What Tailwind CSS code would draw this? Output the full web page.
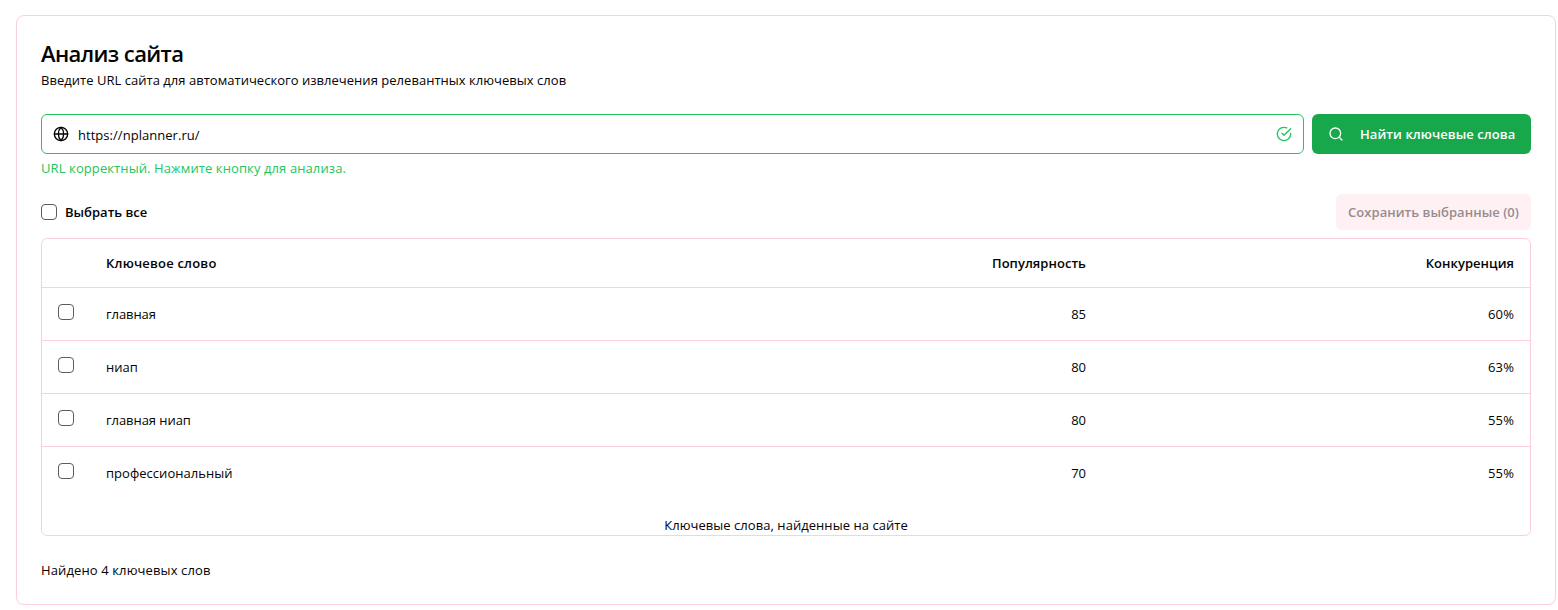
<!DOCTYPE html>
<html lang="ru">
<head>
<meta charset="utf-8">
<title>Анализ сайта</title>
<script src="https://cdn.jsdelivr.net/npm/@tailwindcss/browser@4"></script>
</head>
<body class="bg-white text-[#030303] font-['Open_Sans','Noto_Sans',sans-serif] text-[13px] leading-5 overflow-hidden">
<main class="ml-4 mt-[15px] w-[1540px] h-[590px] rounded-lg border border-[#fccfdc] shadow-xs px-6 pt-6">
  <h1 class="h-[30px] text-[22px] leading-[26px] font-semibold tracking-[-0.6px]">Анализ сайта</h1>
  <p class="h-5 tracking-[0.03px]">Введите URL сайта для автоматического извлечения релевантных ключевых слов</p>

  <div class="mt-6 flex gap-2">
    <div class="flex h-10 w-[1263px] items-center rounded-md border border-[#22c55e] px-[11px]">
      <svg class="size-4 shrink-0" viewBox="0 0 24 24" fill="none" stroke="currentColor" stroke-width="2" stroke-linecap="round" stroke-linejoin="round"><circle cx="12" cy="12" r="10"/><path d="M12 2a14.5 14.5 0 0 0 0 20 14.5 14.5 0 0 0 0-20"/><path d="M2 12h20"/></svg>
      <span class="ml-[9px] mt-0.5 tracking-[0.04px]">https://nplanner.ru/</span>
      <svg class="ml-auto size-4 shrink-0 text-[#22c55e]" viewBox="0 0 24 24" fill="none" stroke="currentColor" stroke-width="2" stroke-linecap="round" stroke-linejoin="round"><path d="M22 11.08V12a10 10 0 1 1-5.93-9.14"/><path d="m9 11 3 3L22 4"/></svg>
    </div>
    <button class="flex h-10 w-[219px] items-center rounded-md bg-[#18a84c] pl-4 font-semibold text-white">
      <svg class="size-4 shrink-0" viewBox="0 0 24 24" fill="none" stroke="currentColor" stroke-width="2" stroke-linecap="round" stroke-linejoin="round"><circle cx="11" cy="11" r="8"/><path d="m21 21-4.3-4.3"/></svg>
      <span class="ml-4 whitespace-nowrap tracking-[0.07px]">Найти ключевые слова</span>
    </button>
  </div>
  <p class="mt-1 h-5 tracking-[0.1px] text-[#22c55e]">URL корректный. Нажмите кнопку для анализа.</p>

  <div class="mt-4 flex h-9 items-center justify-between">
    <label class="flex items-center gap-2 font-semibold"><i class="size-4 rounded-[4px] border border-[#5c5c5c]"></i><span>Выбрать все</span></label>
    <button class="flex h-9 w-[195px] items-center justify-center rounded-md bg-[#fff1f3] font-semibold text-[#968c8e]"><span class="whitespace-nowrap tracking-[0.05px]">Сохранить выбранные (0)</span></button>
  </div>

  <section class="mt-2 h-[298px] rounded-md border border-[#fccfdc]">
    <div class="flex h-[49px] items-center border-b border-[#fccfdc] pl-16 pr-4 font-semibold">
      <span class="tracking-[0.2px]">Ключевое слово</span><span class="ml-auto tracking-[0.04px]">Популярность</span><span class="w-[428px] text-right tracking-[0.04px]">Конкуренция</span>
    </div>
    <div class="flex h-[53px] items-center border-b border-[#fccfdc] px-4">
      <i class="mb-1 size-4 rounded-[4px] border border-[#5c5c5c]"></i><span class="ml-8 tracking-[-0.08px]">главная</span><span class="ml-auto">85</span><span class="w-[428px] text-right tracking-[0.1px]">60%</span>
    </div>
    <div class="flex h-[53px] items-center border-b border-[#fccfdc] px-4">
      <i class="mb-1 size-4 rounded-[4px] border border-[#5c5c5c]"></i><span class="ml-8">ниап</span><span class="ml-auto">80</span><span class="w-[428px] text-right tracking-[0.1px]">63%</span>
    </div>
    <div class="flex h-[53px] items-center border-b border-[#fccfdc] px-4">
      <i class="mb-1 size-4 rounded-[4px] border border-[#5c5c5c]"></i><span class="ml-8 tracking-[-0.06px]">главная ниап</span><span class="ml-auto">80</span><span class="w-[428px] text-right tracking-[0.1px]">55%</span>
    </div>
    <div class="flex h-[52px] items-center px-4">
      <i class="mb-1 size-4 rounded-[4px] border border-[#5c5c5c]"></i><span class="ml-8 tracking-[0.03px]">профессиональный</span><span class="ml-auto">70</span><span class="w-[428px] text-right tracking-[0.1px]">55%</span>
    </div>
    <p class="mt-4 h-5 text-center tracking-[0.05px]">Ключевые слова, найденные на сайте</p>
  </section>
  <p class="mt-6 h-5 tracking-[0.12px]">Найдено 4 ключевых слов</p>
</main>
</body>
</html>
